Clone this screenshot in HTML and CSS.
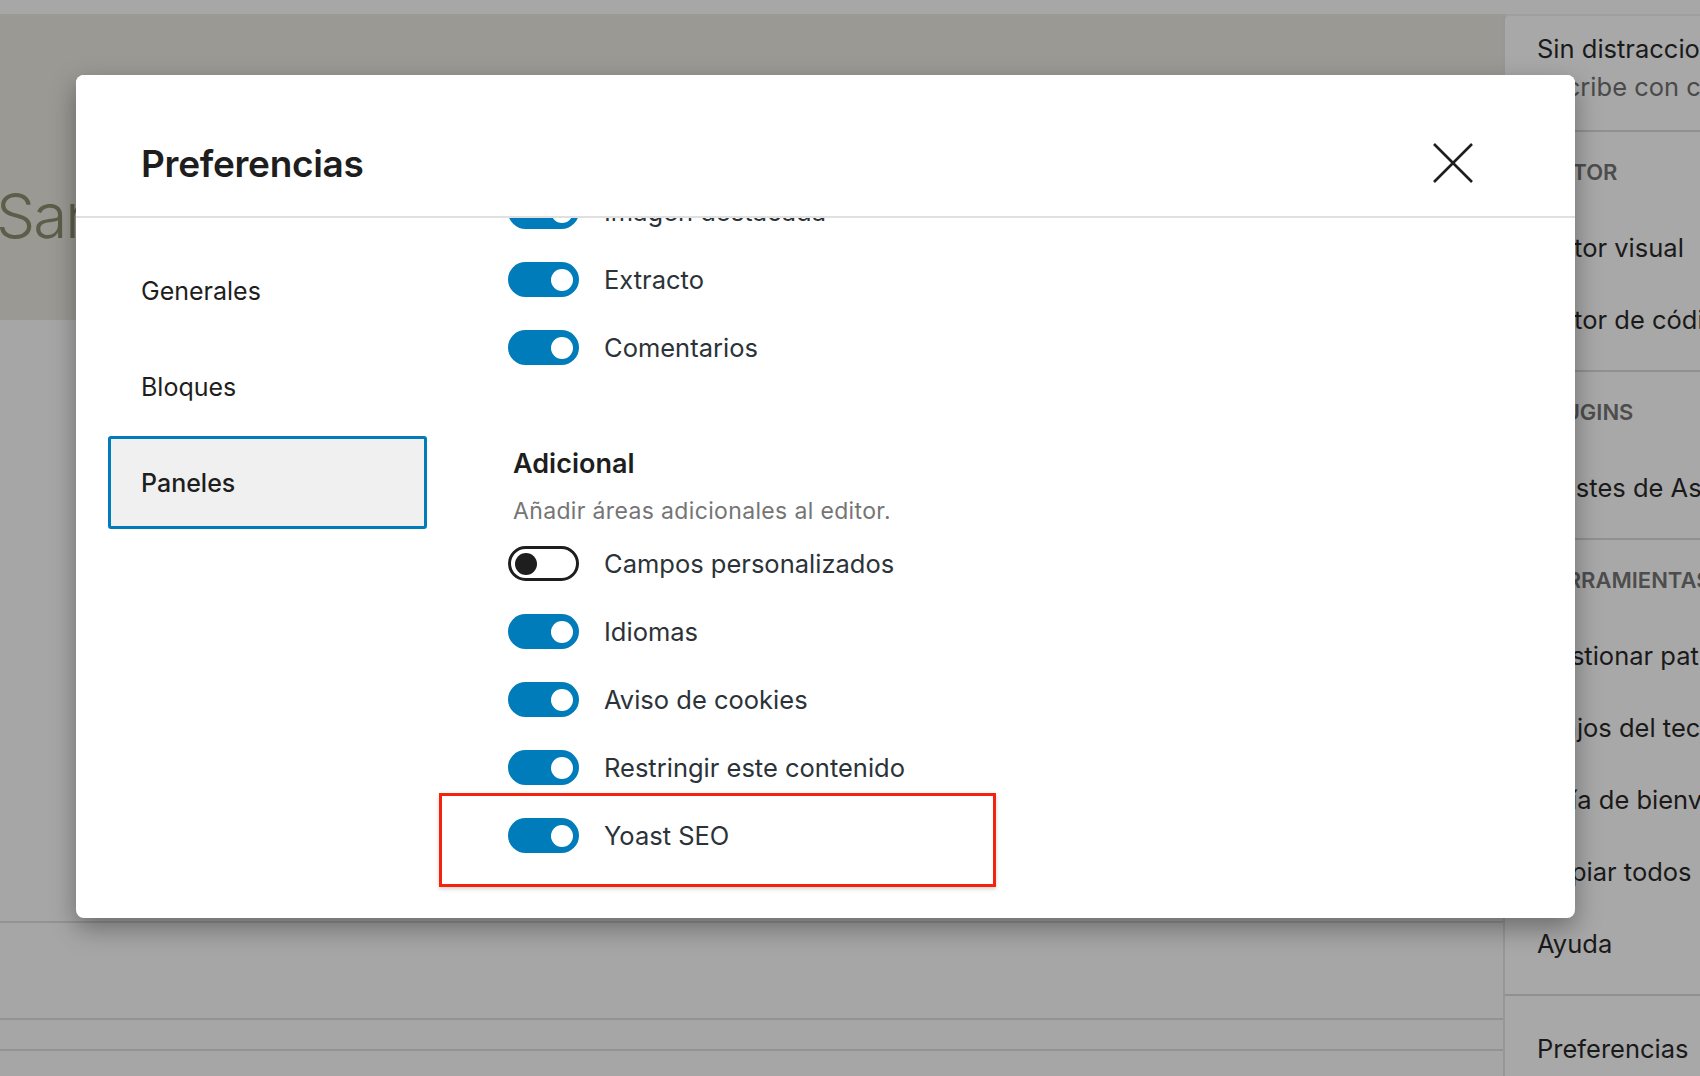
FILE: index.html
```html
<!DOCTYPE html>
<html lang="es">
<head>
    <meta charset="UTF-8">
    <meta name="viewport" content="width=device-width, initial-scale=1.0">
    <title>Preferencias</title>
    <link rel="stylesheet" href="styles.css">
</head>
<body>
    <div class="editor">
        <div class="editor-top"></div>
        <div class="editor-header">
            <h1 class="site-title">Sarah</h1>
        </div>
        <div class="editor-canvas">
            <div class="canvas-line line-one"></div>
            <div class="canvas-line line-two"></div>
            <div class="canvas-line line-three"></div>
        </div>
    </div>

    <!-- options dropdown behind the modal -->
    <div class="options-menu">
        <div class="menu-group first">
            <div class="menu-item with-info">Sin distracciones</div>
            <div class="menu-info">Escribe con calma</div>
        </div>
        <div class="menu-group">
            <div class="menu-heading">Editor</div>
            <div class="menu-item">Editor visual</div>
            <div class="menu-item">Editor de código</div>
        </div>
        <div class="menu-group">
            <div class="menu-heading">Plugins</div>
            <div class="menu-item">Ajustes de Astra</div>
        </div>
        <div class="menu-group">
            <div class="menu-heading">Herramientas</div>
            <div class="menu-item">Gestionar patrones</div>
            <div class="menu-item">Atajos del teclado</div>
            <div class="menu-item">Guía de bienvenida</div>
            <div class="menu-item">Copiar todos los bloques</div>
            <div class="menu-item">Ayuda</div>
        </div>
        <div class="menu-group last">
            <div class="menu-item">Preferencias</div>
        </div>
    </div>

    <div class="modal">
        <div class="modal-header">
            <h2 class="modal-title">Preferencias</h2>
            <button class="close-button" aria-label="Cerrar">
                <svg width="44" height="44" viewBox="0 0 44 44">
                    <path d="M3 3 L41 41 M41 3 L3 41" stroke="#1e1e1e" stroke-width="2.6" fill="none"/>
                </svg>
            </button>
        </div>
        <div class="modal-body">
            <nav class="tabs">
                <div class="tab">Generales</div>
                <div class="tab">Bloques</div>
                <div class="tab active">Paneles</div>
            </nav>
            <div class="panel">
                <div class="panel-scroll">
                    <div class="toggle-row"><span class="toggle on"><span class="thumb"></span></span><span class="toggle-label">Imagen destacada</span></div>
                    <div class="toggle-row"><span class="toggle on"><span class="thumb"></span></span><span class="toggle-label">Extracto</span></div>
                    <div class="toggle-row"><span class="toggle on"><span class="thumb"></span></span><span class="toggle-label">Comentarios</span></div>

                    <h3 class="section-title">Adicional</h3>
                    <p class="section-desc">Añadir áreas adicionales al editor.</p>

                    <div class="toggle-row"><span class="toggle off"><span class="thumb"></span></span><span class="toggle-label">Campos personalizados</span></div>
                    <div class="toggle-row"><span class="toggle on"><span class="thumb"></span></span><span class="toggle-label">Idiomas</span></div>
                    <div class="toggle-row"><span class="toggle on"><span class="thumb"></span></span><span class="toggle-label">Aviso de cookies</span></div>
                    <div class="toggle-row"><span class="toggle on"><span class="thumb"></span></span><span class="toggle-label">Restringir este contenido</span></div>
                    <div class="toggle-row marked">
                        <span class="toggle on"><span class="thumb"></span></span><span class="toggle-label">Yoast SEO</span>
                        <div class="highlight-box"></div>
                    </div>
                </div>
            </div>
        </div>
    </div>
</body>
</html>
```

FILE: styles.css
```css
body {
    margin: 0;
    width: 1700px;
    height: 1076px;
    overflow: hidden;
    position: relative;
    background: #a6a6a6;
    font-family: Inter, "Noto Sans", sans-serif;
    color: #1e1e1e;
}

/* page behind the overlay */
.editor-top {
    height: 14px;
    background: #a7a7a7;
}
.editor-header {
    height: 306px;
    background: #9a9994;
    overflow: hidden;
}
.site-title {
    margin: 160px 0 0 -4px;
    font-size: 62px;
    font-weight: 300;
    line-height: 84px;
    letter-spacing: -2px;
    color: #5c5e4a;
}
.editor-canvas {
    padding-top: 601px;
}
.canvas-line {
    height: 2px;
    background: #939393;
}
.line-two {
    margin-top: 95px;
}
.line-three {
    margin-top: 29px;
}

/* options menu */
.options-menu {
    position: absolute;
    top: 14px;
    left: 1503px;
    width: 340px;
    bottom: -20px;
    background: #a8a8a8;
    border-left: 2px solid #979797;
    border-top: 2px solid #9f9f9f;
    border-top-left-radius: 6px;
    white-space: nowrap;
    font-size: 25.5px;
    color: #1a1a1a;
}
.menu-group {
    padding: 8px 0 14px;
    border-bottom: 2px solid #909090;
}
.menu-group.first {
    padding: 14px 0 24px;
}
.menu-group.last {
    padding-top: 17px;
    border-bottom: none;
}
.menu-item {
    height: 72px;
    line-height: 72px;
    padding-left: 32px;
}
.menu-item.with-info {
    height: 38px;
    line-height: 38px;
}
.menu-info {
    height: 38px;
    line-height: 38px;
    padding-left: 32px;
    color: #4a4a4a;
}
.menu-heading {
    height: 64px;
    line-height: 64px;
    margin-bottom: 8px;
    padding-left: 32px;
    font-size: 22px;
    font-weight: 600;
    text-transform: uppercase;
    color: #4d4d4d;
}

/* modal */
.modal {
    position: absolute;
    left: 76px;
    top: 75px;
    width: 1499px;
    height: 843px;
    background: #fff;
    border-radius: 8px;
    overflow: hidden;
    box-shadow: 0 10px 26px rgba(0, 0, 0, 0.35);
}
.modal-header {
    box-sizing: border-box;
    height: 143px;
    padding: 35px 100px 0 65px;
    display: flex;
    align-items: center;
    justify-content: space-between;
    border-bottom: 2px solid #e0e0e0;
    background: #fff;
    position: relative;
    z-index: 1;
}
.modal-title {
    margin: 0;
    font-size: 37px;
    font-weight: 600;
    letter-spacing: -0.3px;
}
.close-button {
    border: none;
    background: none;
    padding: 0;
    width: 44px;
    height: 44px;
    display: flex;
}
.modal-body {
    display: flex;
    height: 700px;
}
.tabs {
    padding: 26px 0 0 32px;
    width: 319px;
    flex-shrink: 0;
}
.tab {
    box-sizing: border-box;
    height: 93px;
    margin-bottom: 3px;
    padding-left: 30px;
    display: flex;
    align-items: center;
    border: 3px solid transparent;
    border-radius: 3px;
    font-size: 25px;
}
.tab.active {
    border-color: #007cba;
    background: #f0f0f0;
    font-weight: 500;
}
.panel {
    flex: 1;
    margin-left: 81px;
}
.panel-scroll {
    margin-top: -24px;
}
.toggle-row {
    height: 35px;
    margin-bottom: 33px;
    display: flex;
    align-items: center;
    gap: 25px;
    position: relative;
}
.toggle {
    box-sizing: border-box;
    width: 71px;
    height: 35px;
    border-radius: 18px;
    display: flex;
    align-items: center;
    padding: 0 6px;
}
.toggle.on {
    background: #007cba;
    justify-content: flex-end;
}
.toggle.off {
    background: #fff;
    border: 3px solid #1e1e1e;
    padding: 0 4px;
}
.thumb {
    width: 22px;
    height: 22px;
    border-radius: 50%;
    background: #fff;
}
.toggle.off .thumb {
    background: #1e1e1e;
}
.toggle-label {
    font-size: 25.5px;
    color: #2c3338;
}
.section-title {
    margin: 83px 0 0 5px;
    font-size: 27px;
    font-weight: 600;
    line-height: 32px;
}
.section-desc {
    margin: 16px 0 20px 5px;
    font-size: 23px;
    letter-spacing: 0.35px;
    line-height: 30px;
    color: #757575;
}
.highlight-box {
    position: absolute;
    left: -69px;
    top: -25px;
    width: 557px;
    height: 94px;
    box-sizing: border-box;
    border: 3px solid #f5230d;
    box-shadow: 0 2px 4px rgba(0, 0, 0, 0.18);
}
```
